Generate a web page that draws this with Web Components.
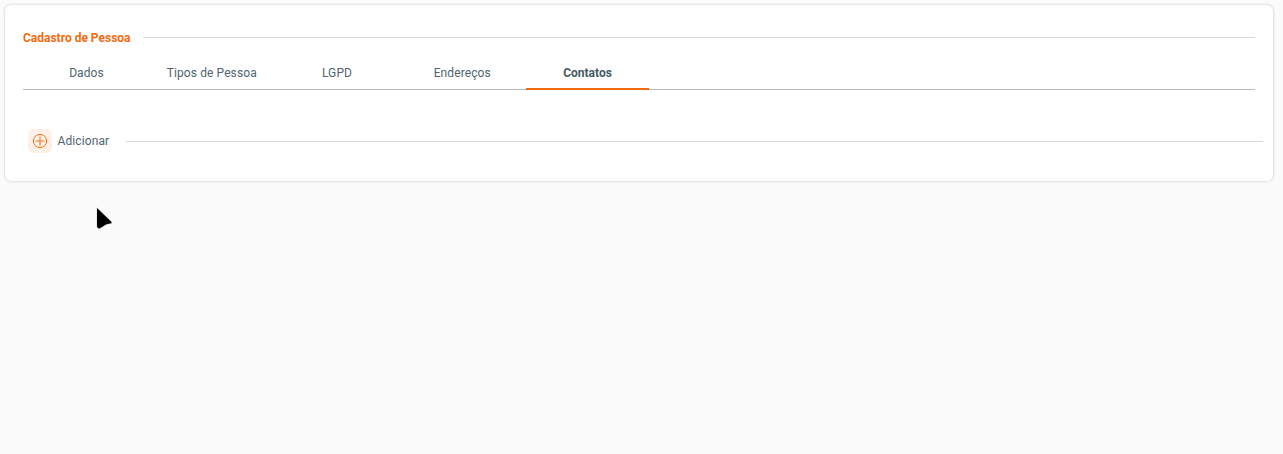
<!DOCTYPE html>
<html lang="pt">
<head>
<meta charset="utf-8">
<title>Cadastro de Pessoa</title>
<style>
  html, body { margin: 0; height: 100%; }
  body {
    background: #fbfbfb;
    font-family: Roboto, "Liberation Sans", sans-serif;
    color: #455a64;
    overflow: hidden;
  }
</style>
</head>
<body>
<page-shell>
  <person-card heading="Cadastro de Pessoa">
    <tab-bar slot="tabs" active="4" labels="Dados|Tipos de Pessoa|LGPD|Endereços|Contatos"></tab-bar>
    <add-row slot="body" label="Adicionar"></add-row>
  </person-card>
  <mouse-cursor></mouse-cursor>
</page-shell>

<script>
class PageShell extends HTMLElement {
  constructor() {
    super();
    this.attachShadow({ mode: 'open' }).innerHTML = `
      <style>
        :host { display: block; position: relative; height: 454px; padding: 5px 10px 0 5px; box-sizing: border-box; }
      </style>
      <slot></slot>`;
  }
}

class PersonCard extends HTMLElement {
  constructor() {
    super();
    this.attachShadow({ mode: 'open' }).innerHTML = `
      <style>
        :host {
          display: block;
          height: 176px;
          box-sizing: border-box;
          background: #fff;
          border-radius: 6px;
          box-shadow: 0 0 3px rgba(69, 90, 100, .35);
          padding: 22px 18px 0;
        }
        .head { display: flex; align-items: flex-start; gap: 12px; height: 21px; }
        h2 { margin: 1px 0 0; font-size: 12px; font-weight: 700; color: #f26a0f; line-height: 20px; white-space: nowrap; }
        .rule { flex: 1; height: 1px; margin-top: 10px; background: #d5dadd; }
      </style>
      <div class="head"><h2></h2><div class="rule"></div></div>
      <slot name="tabs"></slot>
      <slot name="body"></slot>`;
    this.shadowRoot.querySelector('h2').textContent = this.getAttribute('heading');
  }
}

class TabBar extends HTMLElement {
  constructor() {
    super();
    this.attachShadow({ mode: 'open' }).innerHTML = `
      <style>
        :host {
          display: flex;
          gap: 2.25px;
          margin-top: 9px;
          height: 33px;
          box-sizing: border-box;
          padding-left: 2px;
          border-bottom: 1px solid #b4bcc1;
        }
        .tab {
          width: 123px;
          height: 33px;
          box-sizing: border-box;
          text-align: center;
          font-size: 12px;
          letter-spacing: .1px;
          line-height: 33px;
          color: #4f646e;
        }
        .tab.on { font-weight: 700; letter-spacing: 0; color: #455a64; border-bottom: 2px solid #f26a0f; }
      </style>`;
    const active = Number(this.getAttribute('active'));
    this.getAttribute('labels').split('|').forEach((label, i) => {
      const tab = document.createElement('div');
      tab.className = i === active ? 'tab on' : 'tab';
      tab.textContent = label;
      this.shadowRoot.appendChild(tab);
    });
  }
}

class AddRow extends HTMLElement {
  constructor() {
    super();
    this.attachShadow({ mode: 'open' }).innerHTML = `
      <style>
        :host {
          display: flex;
          align-items: center;
          margin: 39px -8px 0 5px;
          height: 24px;
        }
        .icon {
          width: 24px;
          height: 24px;
          border-radius: 6px;
          background: #fdf0e6;
          display: flex;
          align-items: center;
          justify-content: center;
        }
        span { margin-left: 5.5px; font-size: 12px; letter-spacing: .1px; color: #4f646e; white-space: nowrap; }
        .rule { flex: 1; height: 1px; margin-left: 16.5px; background: #d5dadd; }
      </style>
      <div class="icon">
        <svg width="16" height="16" viewBox="0 0 16 16" fill="none" stroke="#f0701e" stroke-width="1">
          <circle cx="8" cy="8" r="6.6"/>
          <path d="M8 3.5v9M3.5 8h9"/>
        </svg>
      </div>
      <span></span>
      <div class="rule"></div>`;
    this.shadowRoot.querySelector('span').textContent = this.getAttribute('label');
  }
}

class MouseCursor extends HTMLElement {
  constructor() {
    super();
    this.attachShadow({ mode: 'open' }).innerHTML = `
      <style>
        :host { position: absolute; left: 94px; top: 205px; width: 22px; height: 26px; }
        svg { display: block; }
      </style>
      <svg width="22" height="26" viewBox="0 0 22 26">
        <path d="M3 3 L17.5 17 Q18 18.5 16 18.5 Q12 18.5 8 22 Q5 24.5 3.5 22.5 Q3 22 3 21 Z" fill="#000" stroke="#e4e4e4" stroke-width="1.6" stroke-linejoin="round" paint-order="stroke"/>
      </svg>`;
  }
}

customElements.define('page-shell', PageShell);
customElements.define('person-card', PersonCard);
customElements.define('tab-bar', TabBar);
customElements.define('add-row', AddRow);
customElements.define('mouse-cursor', MouseCursor);
</script>
</body>
</html>
